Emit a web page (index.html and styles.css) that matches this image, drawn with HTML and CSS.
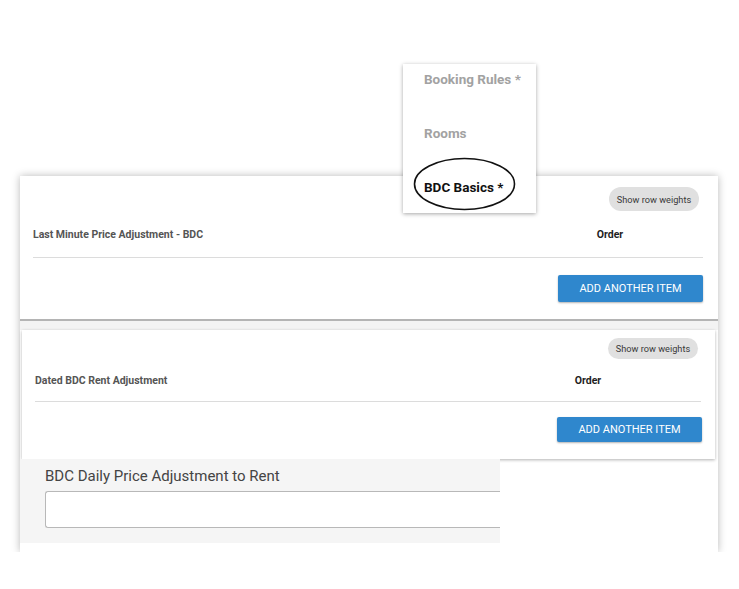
FILE: index.html
```html
<!DOCTYPE html>
<html lang="en">
<head>
  <meta charset="UTF-8">
  <meta name="viewport" content="width=device-width, initial-scale=1.0">
  <title>BDC Basics</title>
  <link rel="stylesheet" href="styles.css">
</head>
<body>
  <div class="sheet">
    <div class="panel panel-first">
      <div class="panel-top">
        <button class="weights-btn">Show row weights</button>
      </div>
      <div class="list-head">
        <span class="list-title">Last Minute Price Adjustment - BDC</span>
        <span class="order-col">Order</span>
      </div>
      <div class="panel-actions">
        <button class="add-btn">ADD ANOTHER ITEM</button>
      </div>
    </div>

    <div class="band"></div>

    <div class="panel panel-second">
      <div class="panel-top">
        <button class="weights-btn">Show row weights</button>
      </div>
      <div class="list-head">
        <span class="list-title">Dated BDC Rent Adjustment</span>
        <span class="order-col">Order</span>
      </div>
      <div class="panel-actions">
        <button class="add-btn">ADD ANOTHER ITEM</button>
      </div>
    </div>

    <div class="field-area">
      <label class="field-label" for="daily">BDC Daily Price Adjustment to Rent</label>
      <input class="field-input" type="text" id="daily">
    </div>
  </div>

  <!-- tab menu shown over the form -->
  <div class="tab-menu">
    <div class="tab-item">Booking Rules *</div>
    <div class="tab-item">Rooms</div>
    <div class="tab-item active">BDC Basics *</div>
    <svg class="circle-mark" width="103" height="54" viewBox="0 0 103 54">
      <ellipse cx="51.5" cy="27" rx="50" ry="25.5" fill="none" stroke="#111" stroke-width="1.6"/>
    </svg>
  </div>
</body>
</html>
```

FILE: styles.css
```css
body {
  margin: 0;
  padding: 0;
  background-color: #fff;
  font-family: Roboto, "Liberation Sans", Arial, sans-serif;
}

.sheet {
  margin: 176px 0 0 20px;
  width: 698px;
  height: 376px;
  background-color: #fff;
  box-shadow: 0 0 8px rgba(0, 0, 0, 0.28);
  display: flex;
  flex-direction: column;
}

.panel {
  background-color: #fff;
  display: flex;
  flex-direction: column;
}

.panel-first {
  height: 145px;
  flex-shrink: 0;
  border-bottom: 2px solid #b4b4b4;
  padding: 11px 15px 0 13px;
  box-sizing: border-box;
}

.panel-second {
  width: 693px;
  height: 129px;
  flex-shrink: 0;
  margin-left: 2px;
  padding: 8px 14px 0 13px;
  box-sizing: border-box;
  box-shadow: 0 1px 3px rgba(0, 0, 0, 0.3);
}

.band {
  height: 9px;
  flex-shrink: 0;
  background-color: #f3f3f3;
}

.panel-top {
  display: flex;
  justify-content: flex-end;
}

.panel-first .panel-top {
  margin-right: 4px;
}

.panel-second .panel-top {
  margin-right: 3px;
}

.weights-btn {
  border: none;
  background-color: #e0e0e0;
  color: #3a3a3a;
  font-family: Roboto, "Liberation Sans", Arial, sans-serif;
  font-size: 9.2px;
  border-radius: 12px;
  width: 90px;
  height: 24px;
  padding: 0;
}

.panel-second .weights-btn {
  height: 21px;
}

.list-head {
  display: flex;
  align-items: center;
  border-bottom: 1px solid #dcdcdc;
  height: 46px;
}

.panel-second .list-head {
  height: 42px;
}

.list-title {
  flex: 1;
  font-size: 10.5px;
  font-weight: bold;
  color: #555;
}

.order-col {
  width: 100px;
  text-align: center;
  font-size: 10.5px;
  font-weight: bold;
  color: #1e1e1e;
}

.panel-first .order-col {
  margin-right: 43px;
}

.panel-second .order-col {
  margin-right: 63px;
}

.panel-actions {
  display: flex;
  justify-content: flex-end;
  padding-top: 17px;
}

.panel-second .panel-actions {
  padding-top: 15px;
  margin-right: -1px;
}

.add-btn {
  width: 145px;
  height: 27px;
  border: none;
  border-radius: 2px;
  background-color: #2f87cd;
  color: #fff;
  font-family: Roboto, "Liberation Sans", Arial, sans-serif;
  font-size: 11px;
  letter-spacing: 0;
  box-shadow: 0 1px 2px rgba(0, 0, 0, 0.3);
  padding: 0;
}

.panel-second .add-btn {
  height: 25px;
}

.field-area {
  width: 480px;
  height: 84px;
  flex-shrink: 0;
  background-color: #f5f5f5;
  padding: 8px 0 0 25px;
  box-sizing: border-box;
}

.field-label {
  display: block;
  font-size: 15px;
  color: #444;
  margin-bottom: 6px;
}

.field-input {
  display: block;
  width: 455px;
  height: 37px;
  box-sizing: border-box;
  border: 1px solid #b8b8b8;
  border-right: none;
  border-radius: 3px 0 0 3px;
  background-color: #fff;
}

.tab-menu {
  position: absolute;
  left: 403px;
  top: 64px;
  width: 133px;
  height: 149px;
  padding: 6px 0 0 21px;
  box-sizing: border-box;
  background-color: #fff;
  box-shadow: 0 1px 4px rgba(0, 0, 0, 0.35);
}

.tab-item {
  font-size: 13.5px;
  font-weight: bold;
  color: #a2a2a2;
  line-height: 18px;
  margin-bottom: 36px;
}

.tab-item.active {
  color: #111;
}

.circle-mark {
  position: absolute;
  left: 10px;
  top: 93px;
}
```
